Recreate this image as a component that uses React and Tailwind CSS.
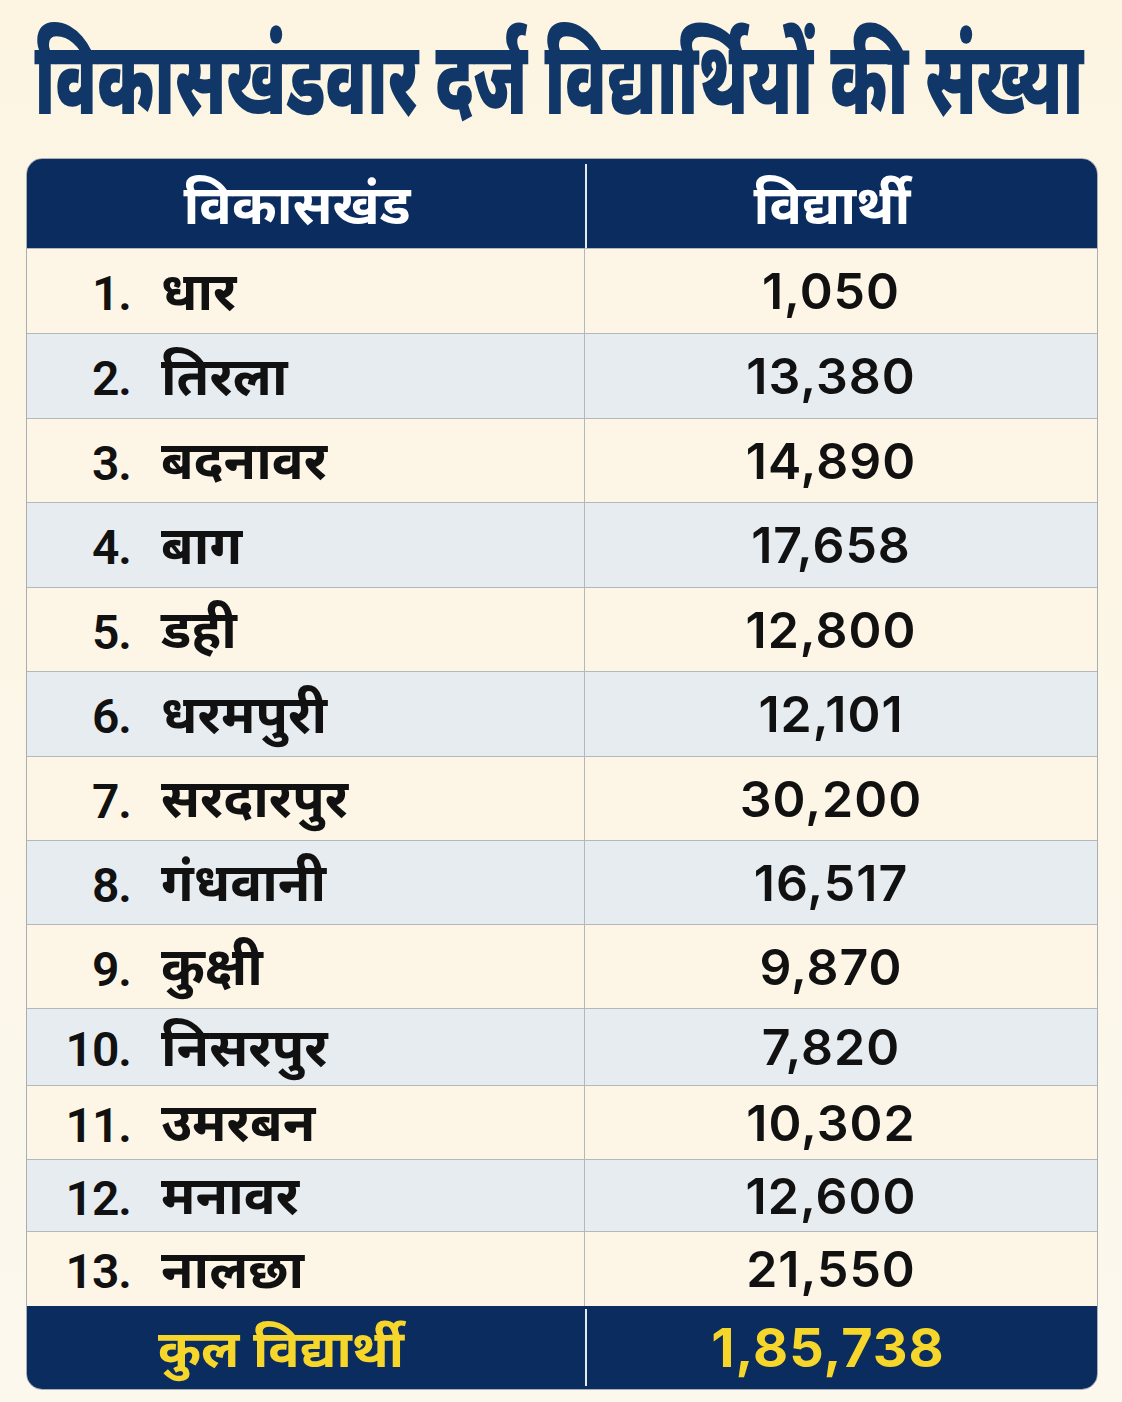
import React from "react";

const rows = [
  { no: "1.", name: "धार", count: "1,050", h: "h-[85px]" },
  { no: "2.", name: "तिरला", count: "13,380", h: "h-[85px]" },
  { no: "3.", name: "बदनावर", count: "14,890", h: "h-[84px]" },
  { no: "4.", name: "बाग", count: "17,658", h: "h-[85px]" },
  { no: "5.", name: "डही", count: "12,800", h: "h-[84px]" },
  { no: "6.", name: "धरमपुरी", count: "12,101", h: "h-[85px]" },
  { no: "7.", name: "सरदारपुर", count: "30,200", h: "h-[84px]" },
  { no: "8.", name: "गंधवानी", count: "16,517", h: "h-[84px]" },
  { no: "9.", name: "कुक्षी", count: "9,870", h: "h-[84px]" },
  { no: "10.", name: "निसरपुर", count: "7,820", h: "h-[77px]" },
  { no: "11.", name: "उमरबन", count: "10,302", h: "h-[74px]" },
  { no: "12.", name: "मनावर", count: "12,600", h: "h-[72px]" },
  { no: "13.", name: "नालछा", count: "21,550", h: "h-[75px]" },
];

const hindi = "font-['Noto_Sans_Devanagari','Noto_Sans',sans-serif]";

export default function App() {
  return (
    <div className="w-[1122px] h-[1402px] bg-gradient-to-b from-[#fdf5e2] to-[#fcf8ee] px-[26px]">
      {/* Title */}
      <div className="h-[158px] flex items-center justify-center pt-[22px] pr-[4px]">
        <h1
          className={`${hindi} whitespace-nowrap inline-block scale-x-[0.645] text-[102px] leading-none font-black text-[#113768]`}
        >
          विकासखंडवार दर्ज विद्यार्थियों की संख्या
        </h1>
      </div>

      {/* Table */}
      <div className="w-[1072px] rounded-[16px] overflow-hidden border border-[#a9aeb3]">
        {/* Header */}
        <div className="flex h-[89px] bg-[#0b2c5e] text-white">
          <div className={`${hindi} w-[558px] flex items-center justify-center pt-[14px] pr-[18px] text-[54px] leading-none font-bold`}>
            विकासखंड
          </div>
          <div className="w-[2px] bg-[#e6e9ee] mt-[5px]" />
          <div className={`${hindi} flex-1 flex items-center justify-center pt-[14px] pr-[20px] text-[54px] leading-none font-bold`}>
            विद्यार्थी
          </div>
        </div>

        {/* Body */}
        {rows.map((r, i) => (
          <div
            key={r.no}
            className={`flex ${r.h} border-t border-[#b4b8bc] ${
              i % 2 === 0 ? "bg-[#fdf6e6]" : "bg-[#e6ecf0]"
            } text-[#111]`}
          >
            <div className="w-[558px] flex items-center border-r border-[#b4b8bc]">
              <span className="w-[104px] text-right pt-[6px] font-['Roboto',sans-serif] font-semibold text-[48px] leading-none tracking-[-1px]">
                {r.no}
              </span>
              <span className={`${hindi} ml-[30px] pt-[12px] text-[53px] leading-none font-bold`}>
                {r.name}
              </span>
            </div>
            <div className="flex-1 flex items-center justify-center pr-[20px] font-['Inter',sans-serif] font-semibold text-[50px] leading-none tracking-[1px]">
              {r.count}
            </div>
          </div>
        ))}

        {/* Footer */}
        <div className="flex h-[83px] bg-[#0b2c5e] text-[#f6d62a]">
          <div className={`${hindi} w-[558px] flex items-center justify-center pt-[12px] pr-[50px] text-[52px] leading-none font-bold`}>
            कुल विद्यार्थी
          </div>
          <div className="w-[2px] bg-[#e6e9ee] my-[3px]" />
          <div className="flex-1 flex items-center justify-center pr-[28px] font-['Inter',sans-serif] font-bold text-[54px] leading-none tracking-[1px]">
            1,85,738
          </div>
        </div>
      </div>
    </div>
  );
}
